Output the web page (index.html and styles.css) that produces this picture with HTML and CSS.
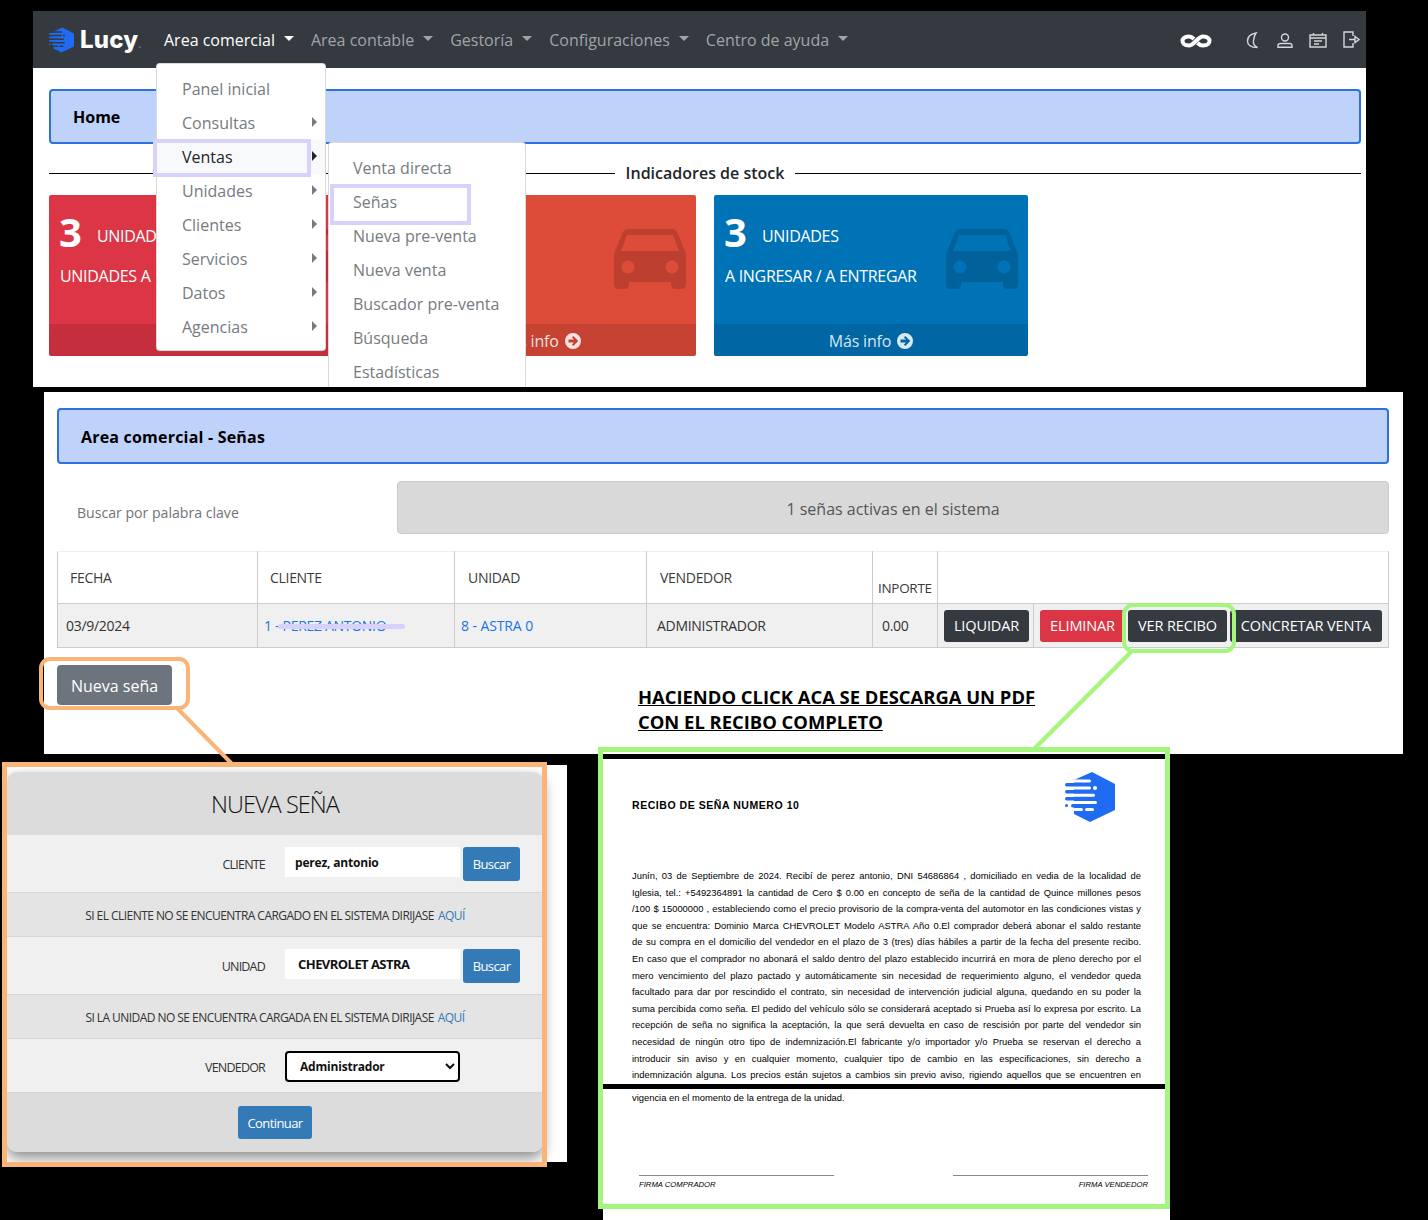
FILE: index.html
```html
<!DOCTYPE html>
<html lang="es">
<head>
<meta charset="utf-8">
<title>Lucy - Señas</title>
<link rel="stylesheet" href="styles.css">
</head>
<body>
<svg class="defs" width="0" height="0" aria-hidden="true">
  <symbol id="hexlogo" viewBox="0 0 50 50">
    <path fill="#1f6bf2" d="M27 0 50 12V38L25 50 9 42V8Z"/>
    <g fill="#1f6bf2">
      <rect x="0" y="11" width="14" height="3.400" rx="1.700"/>
      <rect x="0" y="18" width="14" height="3.400" rx="1.700"/>
      <rect x="0" y="25" width="14" height="3.400" rx="1.700"/>
      <rect x="0" y="32" width="3" height="3" rx="1.500"/>
      <rect x="6" y="32" width="10" height="3.400" rx="1.700"/>
    </g>
    <g fill="currentColor">
      <rect x="8" y="7.500" width="18" height="3" rx="1.500"/>
      <rect x="8" y="14.600" width="18" height="3" rx="1.500"/>
      <rect x="28" y="14" width="4" height="4" rx="2"/>
      <rect x="8" y="21.800" width="22" height="3" rx="1.500"/>
      <rect x="8" y="29" width="24" height="3" rx="1.500"/>
      <rect x="8" y="36" width="10" height="3" rx="1.500"/>
      <rect x="20" y="36" width="9" height="3" rx="1.500"/>
    </g>
  </symbol>
  <symbol id="car" viewBox="0 0 72 60">
    <path fill-rule="evenodd" d="M14 0H58Q62 0 63.500 4L70 20Q72 23 72 27V55Q72 60 67 60H61Q57 60 57 55V53H15V55Q15 60 11 60H5Q0 60 0 55V27Q0 23 2 20L8.500 4Q10 0 14 0ZM13 6 7 22H65L59 6ZM14 31.500A6.500 6.500 0 1 0 14 44.500 6.500 6.500 0 1 0 14 31.500ZM58 31.500A6.500 6.500 0 1 0 58 44.500 6.500 6.500 0 1 0 58 31.500Z"/>
  </symbol>
  <symbol id="arrowcircle" viewBox="0 0 16 16">
    <path fill-rule="evenodd" d="M8 0A8 8 0 1 1 8 16 8 8 0 1 1 8 0ZM8.300 3 6.900 4.400 9 6.500H3.500V9.500H9L6.900 11.600 8.300 13 13.300 8Z"/>
  </symbol>
</svg>

<div class="desk">

  <section class="win win-top">
    <nav class="navbar">
      <a class="brand">
        <svg class="logo-nav"><use href="#hexlogo"/></svg>
        <span class="brand-name">Lucy<i>.</i></span>
      </a>
      <ul class="nav-menu">
        <li class="nav-item active">Area comercial<b class="caret"></b></li>
        <li class="nav-item">Area contable<b class="caret"></b></li>
        <li class="nav-item">Gestoría<b class="caret"></b></li>
        <li class="nav-item">Configuraciones<b class="caret"></b></li>
        <li class="nav-item">Centro de ayuda<b class="caret"></b></li>
      </ul>
      <div class="nav-icons">
        <svg class="ic-inf" viewBox="0 0 32 16"><path d="M9 3.500C4 3.500 2.500 6 2.500 8S4 12.500 9 12.500C14 12.500 18 3.500 23 3.500 28 3.500 29.500 6 29.500 8S28 12.500 23 12.500C20 12.500 18.500 11 17.500 10"/><path d="M9 3.500C11.500 3.500 13 5 14 6"/></svg>
        <svg class="ic-moon" viewBox="0 0 13 17"><path d="M10 1C5 2 1.500 4.500 1.500 9S5 15.500 11.500 15.500C8.500 14 7 11.500 7.500 8.500S8.500 3 10 1Z"/></svg>
        <svg class="ic-user" viewBox="0 0 16 15"><circle cx="8" cy="4.500" r="3.500"/><path d="M1 14.300V12.500Q1 10.500 3.500 10.500H12.500Q15 10.500 15 12.500V14.300Z"/></svg>
        <svg class="ic-cal" viewBox="0 0 18 16"><path d="M1 3H17V15H1ZM1 6H17M4.500 1V3M13.500 1V3M5 9H13M5 12H10"/></svg>
        <svg class="ic-door" viewBox="0 0 17 17"><path d="M10 5V1H1V16H10V12M6 8.500H12V5.500L16 8.500 12 11.500V9"/></svg>
      </div>
    </nav>

    <div class="top-main">
      <h2 class="banner banner-home">Home</h2>
      <div class="divider"><span></span><h3>Indicadores de stock</h3><span></span></div>
      <div class="cards">
        <article class="stat stat-red">
          <div class="stat-head"><strong>3</strong><span>UNIDADES</span></div>
          <p>UNIDADES A</p>
          <svg class="stat-car"><use href="#car"/></svg>
          <footer></footer>
        </article>
        <article class="stat stat-orange">
          <svg class="stat-car"><use href="#car"/></svg>
          <footer>Más info <svg class="stat-arrow"><use href="#arrowcircle"/></svg></footer>
        </article>
        <article class="stat stat-blue">
          <div class="stat-head"><strong>3</strong><span>UNIDADES</span></div>
          <p>A INGRESAR / A ENTREGAR</p>
          <svg class="stat-car"><use href="#car"/></svg>
          <footer>Más info <svg class="stat-arrow"><use href="#arrowcircle"/></svg></footer>
        </article>
      </div>
    </div>

    <ul class="menu menu-main">
      <li>Panel inicial</li>
      <li class="sub">Consultas</li>
      <li class="sub current">Ventas</li>
      <li class="sub">Unidades</li>
      <li class="sub">Clientes</li>
      <li class="sub">Servicios</li>
      <li class="sub">Datos</li>
      <li class="sub">Agencias</li>
    </ul>
    <ul class="menu menu-sub">
      <li>Venta directa</li>
      <li>Señas</li>
      <li>Nueva pre-venta</li>
      <li>Nueva venta</li>
      <li>Buscador pre-venta</li>
      <li>Búsqueda</li>
      <li>Estadísticas</li>
    </ul>
    <div class="mark mark-ventas"></div>
    <div class="mark mark-senas"></div>
  </section>

  <section class="win win-list">
    <h2 class="banner banner-list">Area comercial - Señas</h2>
    <div class="search-row">
      <input class="search" type="text" placeholder="Buscar por palabra clave">
      <div class="count">1 señas activas en el sistema</div>
    </div>
    <table class="grid">
      <colgroup>
        <col class="c1"><col class="c2"><col class="c3"><col class="c4"><col class="c5"><col class="c6"><col class="c7">
      </colgroup>
      <thead>
        <tr>
          <th>FECHA</th><th>CLIENTE</th><th class="nudge">UNIDAD</th><th class="nudge">VENDEDOR</th><th class="low">INPORTE</th><th colspan="2"></th>
        </tr>
      </thead>
      <tbody>
        <tr>
          <td>03/9/2024</td>
          <td class="scribbled"><a>1 - PEREZ ANTONIO</a><i></i></td>
          <td class="unit"><a>8 - ASTRA 0</a></td>
          <td>ADMINISTRADOR</td>
          <td>0.00</td>
          <td class="btn-cell"><button class="btn dark">LIQUIDAR</button></td>
          <td class="btn-cell"><div class="btn-row"><button class="btn red">ELIMINAR</button><button class="btn dark">VER RECIBO</button><button class="btn dark">CONCRETAR VENTA</button></div></td>
        </tr>
      </tbody>
    </table>
    <div class="below">
      <button class="btn-new">Nueva seña</button>
      <p class="note">HACIENDO CLICK ACA SE DESCARGA UN PDF<br>CON EL RECIBO COMPLETO</p>
    </div>
  </section>

  <section class="win win-form">
    <div class="form-card">
      <h2 class="form-title">NUEVA SEÑA</h2>
      <div class="frow light r-client">
        <label>CLIENTE</label>
        <input class="finput" type="text" value="perez, antonio">
        <button class="fbtn">Buscar</button>
      </div>
      <div class="fnote">SI EL CLIENTE NO SE ENCUENTRA CARGADO EN EL SISTEMA DIRIJASE <a>AQUÍ</a></div>
      <div class="frow light r-unit">
        <label>UNIDAD</label>
        <input class="finput pad" type="text" value="CHEVROLET ASTRA">
        <button class="fbtn">Buscar</button>
      </div>
      <div class="fnote">SI LA UNIDAD NO SE ENCUENTRA CARGADA EN EL SISTEMA DIRIJASE <a>AQUÍ</a></div>
      <div class="frow light r-seller">
        <label>VENDEDOR</label>
        <select class="fselect"><option>Administrador</option></select>
      </div>
      <div class="ffoot"><button class="fbtn wide">Continuar</button></div>
    </div>
  </section>

  <section class="win win-pdf">
    <header class="pdf-head">
      <h4>RECIBO DE SEÑA NUMERO 10</h4>
      <svg class="logo-pdf"><use href="#hexlogo"/></svg>
    </header>
    <div class="pdf-body">
      <p>Junín, 03 de Septiembre de 2024. Recibí de perez antonio, DNI 54686864 , domiciliado en vedia de la localidad de</p>
      <p>Iglesia, tel.: +5492364891 la cantidad de Cero  $ 0.00 en concepto de seña de la cantidad de Quince millones pesos</p>
      <p>/100  $ 15000000 , estableciendo como el precio provisorio de la compra-venta del automotor en las condiciones vistas y</p>
      <p>que se encuentra: Dominio  Marca CHEVROLET Modelo ASTRA Año 0.El comprador deberá abonar el saldo restante</p>
      <p>de su compra en el domicilio del vendedor en el plazo de 3 (tres) días hábiles a partir de la fecha del presente recibo.</p>
      <p>En caso que el comprador no abonará el saldo dentro del plazo establecido incurrirá en mora de pleno derecho por el</p>
      <p>mero vencimiento del plazo pactado y automáticamente sin necesidad de requerimiento alguno, el vendedor queda</p>
      <p>facultado para dar por rescindido el contrato, sin necesidad de intervención judicial alguna, quedando en su poder la</p>
      <p>suma percibida como seña. El pedido del vehículo sólo se considerará aceptado si Prueba así lo expresa por escrito. La</p>
      <p>recepción de seña no significa la aceptación, la que será devuelta en caso de rescisión por parte del vendedor sin</p>
      <p>necesidad de ningún otro tipo de indemnización.El fabricante y/o importador y/o Prueba se reservan el derecho a</p>
      <p>introducir sin aviso y en cualquier momento, cualquier tipo de cambio en las especificaciones, sin derecho a</p>
      <p>indemnización alguna. Los precios están sujetos a cambios sin previo aviso, rigiendo aquellos que se encuentren en</p>
    </div>
    <div class="pdf-break"></div>
    <p class="pdf-last">vigencia en el momento de la entrega de la unidad.</p>
    <div class="pdf-sign">
      <span>FIRMA COMPRADOR</span>
      <span class="right">FIRMA VENDEDOR</span>
    </div>
  </section>

  <svg class="connectors" viewBox="0 0 1428 1220" aria-hidden="true">
    <path class="conn-orange" d="M177 708 232 764"/>
    <path class="conn-green" d="M1133 650 1035 748"/>
  </svg>
  <div class="ring ring-new"></div>
  <div class="ring ring-recibo"></div>
  <div class="frame frame-form"></div>
  <div class="frame frame-pdf"></div>
</div>
</body>
</html>
```
FILE: styles.css
```css
* { box-sizing: border-box; }
html, body { margin: 0; padding: 0; background: #000; }
body { font-family: "Open Sans", "Noto Sans", sans-serif; color: #212529; }
.defs { position: absolute; }
ul { list-style: none; margin: 0; padding: 0; }
h2, h3, h4, p { margin: 0; }

.desk { position: relative; width: 1428px; height: 1220px; background: #000; overflow: hidden; }
.win { position: absolute; background: #fff; overflow: hidden; }

/* ---------- top window ---------- */
.win-top { left: 33px; top: 11px; width: 1333px; height: 376px; }
.navbar { display: flex; align-items: center; height: 57px; background: #343a40; padding: 0 6px 0 16px; }
.brand { display: flex; align-items: center; width: 107px; }
.logo-nav { width: 25px; height: 28px; color: #343a40; margin-top: 1px; }
.brand-name { font-family: Inter, "Open Sans", sans-serif; font-weight: 800; font-size: 24px; color: #fff; margin-left: 6px; letter-spacing: .2px; }
.brand-name i { font-size: 11px; color: #8a8f94; font-style: normal; font-weight: 400; letter-spacing: 0; }
.nav-menu { display: flex; align-items: center; flex: 1; }
.nav-item { display: flex; align-items: center; font-size: 16px; color: #a1a4a7; padding: 0 9px 0 8px; white-space: nowrap; }
.nav-item.active { color: #fff; }
.caret { width: 0; height: 0; margin-left: 9px; border-left: 5.500px solid transparent; border-right: 5.500px solid transparent; border-top: 5.500px solid currentColor; margin-top: -3px; }
.nav-icons { display: flex; align-items: center; }
.nav-icons svg { fill: none; stroke: #d4d6d8; stroke-width: 1.400; margin-left: 18px; }
.ic-inf { width: 32px; height: 16px; stroke: #fff !important; stroke-width: 4 !important; margin-top: 2px; }
.ic-moon { width: 13px; height: 17px; margin-left: 34px !important; margin-top: 2px; }
.ic-user { width: 16px; height: 15px; margin-top: 2px; }
.ic-cal { width: 18px; height: 16px; margin-left: 16px !important; }
.ic-door { width: 17px; height: 17px; margin-left: 16px !important; }

.top-main { padding: 21px 5px 0 16px; }
.banner { display: flex; align-items: center; background: #bfd2fa; border: 2px solid #2d70de; border-radius: 4px; font-weight: 700; font-size: 16px; color: #000; padding-left: 22px; }
.banner-home { height: 55px; }
.divider { display: flex; align-items: center; gap: 11px; margin-top: 18px; height: 22px; }
.divider span { flex: 1; height: 1px; background: #000; }
.divider h3 { font-size: 16px; font-weight: 600; color: #212529; }
.cards { display: grid; grid-template-columns: 314px 315px 314px; column-gap: 18px; margin-top: 11px; }
.stat { position: relative; height: 161px; border-radius: 2px; color: #fff; padding: 10px 11px 0; overflow: hidden; }
.stat-red { background: #dc3545; }
.stat-orange { background: #dd4b39; }
.stat-blue { background: #0073b7; }
.stat-head { display: flex; align-items: center; gap: 15px; height: 54px; margin-left: -1px; }
.stat-head strong { font-size: 40px; line-height: 54px; font-weight: 700; }
.stat-head span { font-size: 16px; letter-spacing: -.3px; margin-top: 7px; }
.stat p { font-size: 16px; margin-top: 5px; line-height: 24px; letter-spacing: -.3px; }
.stat-car { position: absolute; right: 10px; top: 34px; width: 72px; height: 60px; fill: rgba(0,0,0,.15); }
.stat footer { position: absolute; left: 0; right: 0; bottom: 0; height: 32px; padding-top: 1px; display: flex; align-items: center; justify-content: center; gap: 6px; background: rgba(0,0,0,.1); color: rgba(255,255,255,.85); font-size: 16px; letter-spacing: -.2px; }
.stat-arrow { width: 16px; height: 16px; fill: rgba(255,255,255,.85); }

.menu { position: absolute; background: #fff; border: 1px solid rgba(0,0,0,.15); border-radius: 4px; padding: 8px 0; }
.menu li { position: relative; height: 34px; line-height: 34px; font-size: 16px; color: #767b80; }
.menu-main { left: 123px; top: 52px; width: 170px; height: 288px; }
.menu-main li { padding-left: 25px; }
.menu-sub { left: 295px; top: 131px; width: 198px; height: 260px; }
.menu-sub li { padding-left: 24px; }
.menu li.sub::after { content: ""; position: absolute; right: 8px; top: 11px; border-left: 5px solid currentColor; border-top: 5px solid transparent; border-bottom: 5px solid transparent; }
.menu li.current { background: #f8f9fa; color: #212529; }
.mark { position: absolute; border: 4px solid #d8d2fb; }
.mark-ventas { left: 120px; top: 128px; width: 158px; height: 38px; }
.mark-senas { left: 297px; top: 173px; width: 141px; height: 41px; }

/* ---------- list window ---------- */
.win-list { left: 44px; top: 392px; width: 1359px; height: 362px; padding: 16px 14px 0 13px; }
.banner-list { height: 56px; padding-top: 2px; letter-spacing: .2px; }
.search-row { display: flex; align-items: flex-start; margin-top: 17px; }
.search { width: 287px; height: 42px; margin: 10px 43px 0 10px; padding: 0 10px; border: 0; outline: 0; background: #fff; font: 14.100px "Open Sans", sans-serif; }
.search::placeholder { color: #6f7479; opacity: 1; }
.count { flex: 1; height: 53px; padding-top: 2px; display: flex; align-items: center; justify-content: center; background: #d9d9d9; border: 1px solid #ccc; border-radius: 4px; font-size: 16px; color: #555; }
.grid { width: 1331px; margin-top: 17px; border-collapse: collapse; table-layout: fixed; font-size: 14px; letter-spacing: -.3px; }
.c1 { width: 200px; } .c2 { width: 197px; } .c3 { width: 192px; } .c4 { width: 226px; } .c5 { width: 65px; } .c6 { width: 96px; } .c7 { width: 355px; }
.grid th { height: 52px; font-weight: 400; text-align: left; color: #3a3a3a; padding: 0 0 0 12px; border: 1px solid #ccc; border-top-color: #eee; }
.grid th.nudge { padding-left: 13px; }
.grid th.low { vertical-align: bottom; padding: 0 0 6px 5px; font-size: 13.500px; }
.grid td { height: 44px; background: #f0f0f0; border: 1px solid #ccc; padding: 0 0 1px 9px; color: #333; white-space: nowrap; }
.grid td:first-child { padding-left: 8px; }
.grid td:nth-child(4) { padding-left: 10px; }
.grid a { color: #1a73e8; }
.grid .unit { padding-left: 6px; letter-spacing: -.1px; }
.scribbled { position: relative; padding-left: 6px !important; }
.scribbled i { position: absolute; left: 20px; top: 20px; width: 127px; height: 5px; border-radius: 3px; background: #d8d2fb; }
.grid td.btn-cell { padding: 0 0 0 6px; }
.btn-row { display: flex; gap: 3px; }
.btn { height: 32px; border: 0; border-radius: 3px; color: #fff; font: 14.500px "Open Sans", sans-serif; letter-spacing: -.12px; padding: 0; white-space: nowrap; }
.dark { background: #343a40; }
.red { background: #dc3545; }
.btn-cell > .btn { width: 85px; }
.btn-row .btn:nth-child(1) { width: 85px; }
.btn-row .btn:nth-child(2) { width: 99px; }
.btn-row .btn:nth-child(3) { width: 152px; }
.below { display: flex; align-items: flex-start; margin-top: 17px; }
.btn-new { width: 115px; height: 40px; padding-top: 2px; background: #6c757d; color: #fff; border: 0; border-radius: 4px; font: 16px "Open Sans", sans-serif; }
.note { margin: 19px 0 0 466px; font-weight: 700; font-size: 18.400px; line-height: 25px; text-decoration: underline; color: #000; white-space: nowrap; }

/* ---------- form window ---------- */
.win-form { left: 2px; top: 765px; width: 565px; height: 397px; padding: 7px 24px 0 5px; }
.form-card { width: 536px; height: 380px; border-radius: 10px; overflow: hidden; box-shadow: 0 6px 14px rgba(0,0,0,.45); background: #f0f0f0; display: flex; flex-direction: column; }
.form-title { height: 63px; display: flex; align-items: center; justify-content: center; background: #dcdcdc; font-size: 23.500px; font-weight: 300; color: #111; letter-spacing: -.95px; }
.frow { display: flex; align-items: center; border-bottom: 1px solid #d6d6d6; }
.frow label { width: 258px; padding-top: 2px; text-align: right; margin-right: 20px; font-size: 12.500px; color: #333; letter-spacing: -.8px; }
.r-client { height: 58px; }
.r-unit { height: 58px; }
.r-seller { height: 54px; padding-top: 2px; }
.finput { width: 175px; height: 30px; border: 0; outline: 0; background: #fff; padding: 0 10px; font: 700 12px "Open Sans", sans-serif; color: #111; letter-spacing: -.2px; margin-top: -3px; }
.finput.pad { padding-left: 13px; font-size: 13px; letter-spacing: -.55px; }
.fbtn { height: 34px; width: 57px; margin-left: 3px; padding-top: 2px; background: #337ab7; color: #fff; border: 0; border-radius: 3px; font: 13px "Open Sans", sans-serif; letter-spacing: -.6px; }
.fbtn.wide { width: 74px; height: 33px; margin: 0; }
.fnote { height: 44px; padding-top: 2px; display: flex; align-items: center; justify-content: center; gap: 4px; background: #e4e4e4; font-size: 12px; color: #333; letter-spacing: -.55px; border-bottom: 1px solid #d6d6d6; white-space: nowrap; }
.fnote a { color: #337ab7; }
.fselect { width: 175px; height: 31px; border: 2px solid #000; border-radius: 4px; background: #fff; padding-left: 9px; font: 700 12px "Open Sans", sans-serif; color: #111; letter-spacing: -.2px; }
.ffoot { flex: 1; display: flex; align-items: center; justify-content: center; background: #dcdcdc; }

/* ---------- pdf window ---------- */
.win-pdf { left: 603px; top: 759px; width: 567px; height: 461px; padding-top: 13px; font-family: "Liberation Sans", Arial, sans-serif; color: #000; }
.pdf-head { display: flex; align-items: flex-start; height: 50px; padding-left: 29px; }
.pdf-head h4 { font-size: 10.500px; font-weight: 700; line-height: 12px; margin-top: 27px; width: 433px; white-space: nowrap; letter-spacing: .55px; }
.logo-pdf { width: 50px; height: 50px; color: #fff; }
.pdf-body { margin-top: 46px; padding: 0 29px; width: 567px; height: 216px; overflow: hidden; }
.pdf-body p, .pdf-last { font-size: 9.400px; line-height: 16.600px; }
.pdf-body p { text-align: justify; text-align-last: justify; white-space: normal; width: 509px; }
.pdf-break { height: 5px; background: #000; }
.pdf-last { padding-left: 29px; margin-top: 1px; }
.pdf-sign { display: flex; justify-content: space-between; margin: 68px 22px 0 36px; }
.pdf-sign span { width: 195px; height: 13px; overflow: hidden; border-top: 1px solid #888; font-size: 7.700px; font-style: italic; padding-top: 4px; line-height: 10px; }
.pdf-sign .right { text-align: right; }

/* ---------- annotations ---------- */
.connectors { position: absolute; inset: 0; width: 1428px; height: 1220px; fill: none; stroke-width: 4; pointer-events: none; }
.conn-orange { stroke: #fbb477; }
.conn-green { stroke: #a3f57d; }
.ring { position: absolute; border-radius: 11px; border-width: 4px; border-style: solid; pointer-events: none; }
.ring-new { left: 39px; top: 657px; width: 151px; height: 53px; border-color: #fbb477; }
.ring-recibo { left: 1122px; top: 603px; width: 114px; height: 50px; border-color: #a3f57d; }
.frame { position: absolute; border-style: solid; border-width: 5px; pointer-events: none; }
.frame-form { left: 2px; top: 762px; width: 545px; height: 405px; border-color: #fbb477; }
.frame-pdf { left: 598px; top: 747px; width: 572px; height: 462px; border-color: #a3f57d; }
```
